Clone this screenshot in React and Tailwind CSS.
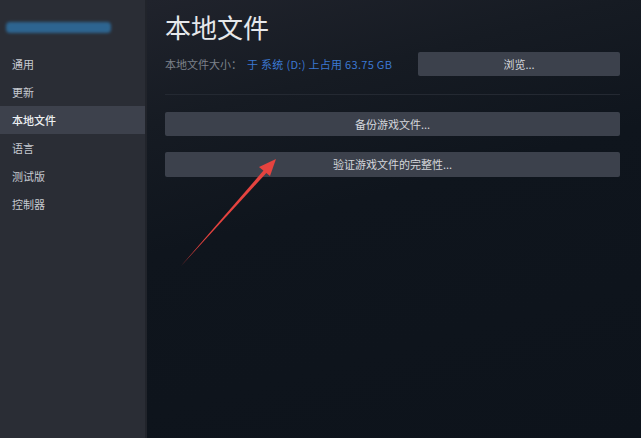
export default function App() {
  const items = ["通用", "更新", "本地文件", "语言", "测试版", "控制器"];
  const font = { fontFamily: '"Noto Sans CJK SC", "Noto Sans", sans-serif' };
  return (
    <div className="w-[641px] h-[438px] flex overflow-hidden relative" style={font}>
      <div className="w-[147px] h-full bg-[#2a2d35] border-r-2 border-[#21242b] flex flex-col shrink-0">
        <div className="h-[50px] pt-[22px] pl-[6px]">
          <div className="w-[105px] h-[11px] rounded-sm bg-[#2e6b9a] blur-[1.5px] opacity-90"></div>
        </div>
        <div className="flex flex-col">
          {items.map((t) => (
            <div
              key={t}
              className={`h-[28px] flex items-center pl-[12px] text-[11px] ${
                t === "本地文件" ? "bg-[#3d414c] text-[#eef0f3] font-medium" : "text-[#c6cad1]"
              }`}
            >
              {t}
            </div>
          ))}
        </div>
      </div>
      <div className="flex-1 h-full bg-[linear-gradient(165deg,#20232c_0%,#161b23_22%,#0f151d_45%,#0d131b_100%)] pl-[18px] pr-[21px] flex flex-col">
        <div className="text-[26px] text-[#e6e8eb] leading-none mt-[14px] h-[31px]">本地文件</div>
        <div className="flex items-center mt-[7px] h-[24px]">
          <div className="text-[11px] text-[#7d828b] w-[82px]">本地文件大小：</div>
          <div className="text-[11px] tracking-[0.3px] text-[#3b78d2] flex-1">于 系统 (D:) 上占用 63.75 GB</div>
          <button className="w-[202px] h-[24px] bg-[#3c414c] rounded-[2px] text-[11px] text-[#d4d7dc]">浏览...</button>
        </div>
        <div className="h-px bg-[#242932] mt-[18px]"></div>
        <button className="h-[24px] mt-[17px] bg-[#3c414c] rounded-[2px] text-[11px] text-[#d4d7dc] w-full">备份游戏文件...</button>
        <button className="h-[25px] mt-[16px] bg-[#3c414c] rounded-[2px] text-[11px] text-[#d4d7dc] w-full">验证游戏文件的完整性...</button>
      </div>
      <svg className="absolute left-0 top-0 pointer-events-none" width="641" height="438">
        <polygon points="181,266 266.5,167 269.5,169.5" fill="#e5433f" />
        <polygon points="276,159 259,167 270,176" fill="#e5433f" />
      </svg>
    </div>
  );
}
